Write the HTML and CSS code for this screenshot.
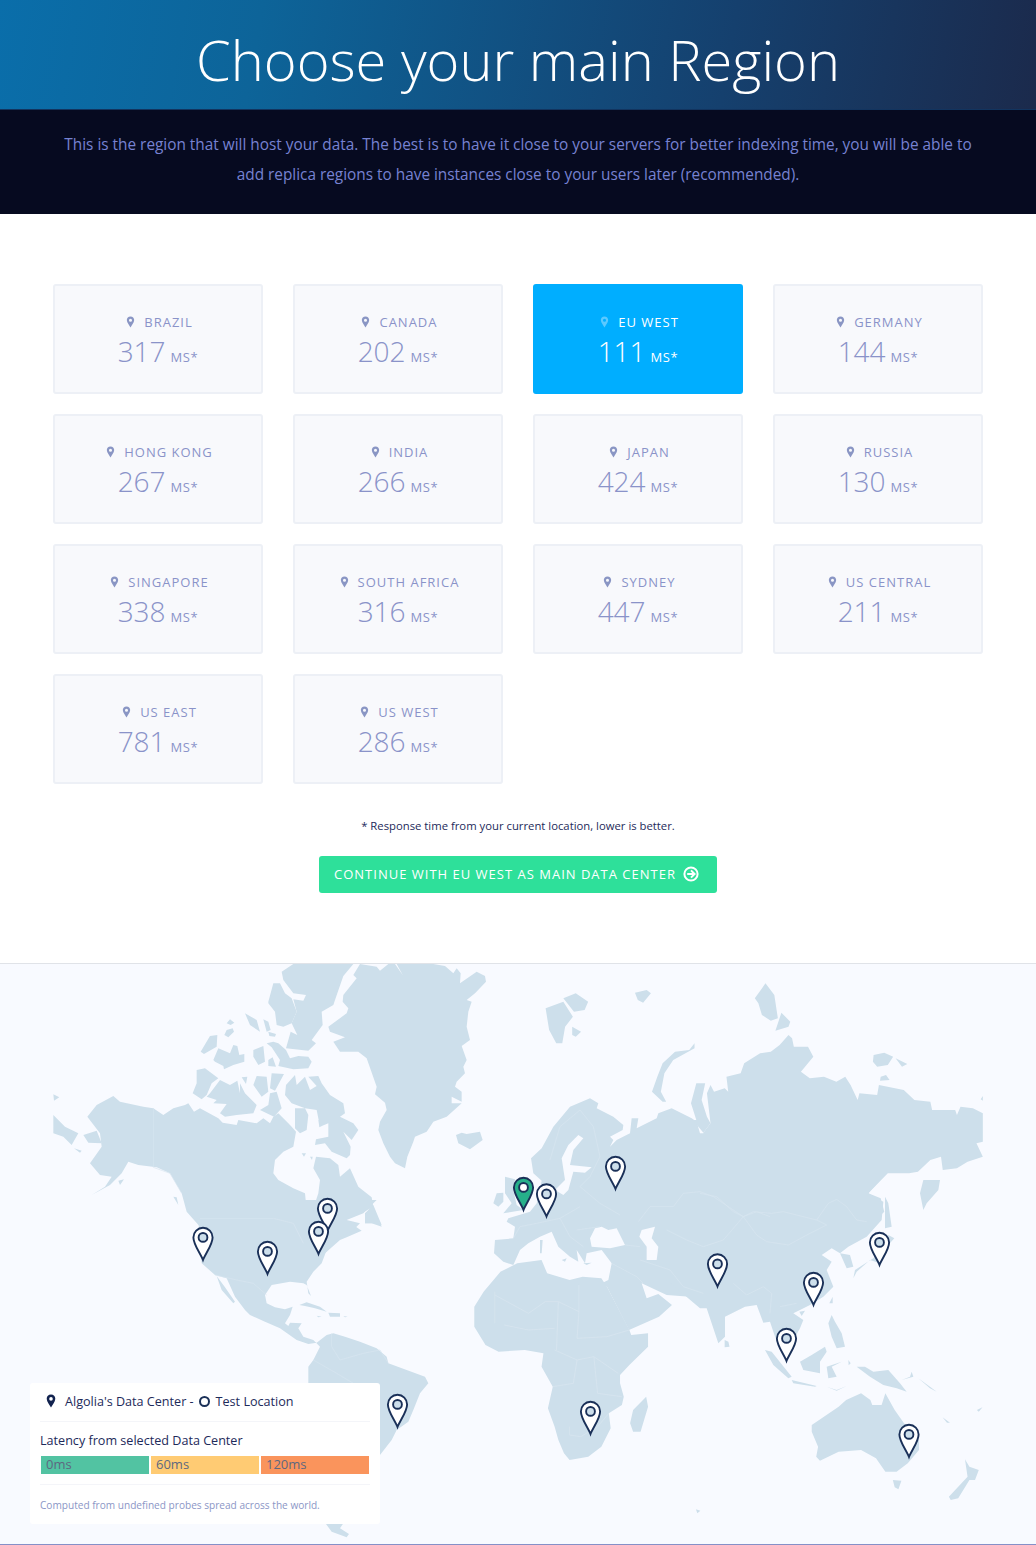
FILE: index.html
```html
<!DOCTYPE html>
<html lang="en">
<head>
  <meta charset="UTF-8" />
  <title>Choose your main Region</title>
  <link rel="stylesheet" href="styles.css">
</head>
<body>
  <svg class="defs" width="0" height="0">
    <symbol id="tiny-pin" viewBox="0 0 10 14">
      <path d="M5 0.5C2.4 0.5 0.7 2.4 0.7 4.8 0.7 7.6 3.6 11 5 13.5 6.4 11 9.3 7.6 9.3 4.8 9.3 2.4 7.6 0.5 5 0.5ZM5 3.1A1.8 1.8 0 1 1 5 6.7 1.8 1.8 0 0 1 5 3.1Z" fill-rule="evenodd"/>
    </symbol>
    <g id="map-pin">
      <path class="pin-body" d="M0-1C-2.5-7.5-9.6-16.5-9.6-23.6A9.6 9.6 0 1 1 9.6-23.6C9.6-16.5 2.5-7.5 0-1Z"/>
      <circle class="pin-dot" cx="0" cy="-23.6" r="4.4"/>
    </g>
  </svg>

  <header class="hero">
    <h1>Choose your main Region</h1>
  </header>
  <div class="intro">
    <p>This is the region that will host your data. The best is to have it close to your servers for better indexing time, you will be able to add replica regions to have instances close to your users later (recommended).</p>
  </div>

  <main class="picker">
    <div class="regions">
      <div class="region"><div class="region-name"><svg class="tiny"><use href="#tiny-pin"/></svg>Brazil</div><div class="region-ms">317<small>ms*</small></div></div>
      <div class="region"><div class="region-name"><svg class="tiny"><use href="#tiny-pin"/></svg>Canada</div><div class="region-ms">202<small>ms*</small></div></div>
      <div class="region selected"><div class="region-name"><svg class="tiny"><use href="#tiny-pin"/></svg>EU West</div><div class="region-ms">111<small>ms*</small></div></div>
      <div class="region"><div class="region-name"><svg class="tiny"><use href="#tiny-pin"/></svg>Germany</div><div class="region-ms">144<small>ms*</small></div></div>
      <div class="region"><div class="region-name"><svg class="tiny"><use href="#tiny-pin"/></svg>Hong Kong</div><div class="region-ms">267<small>ms*</small></div></div>
      <div class="region"><div class="region-name"><svg class="tiny"><use href="#tiny-pin"/></svg>India</div><div class="region-ms">266<small>ms*</small></div></div>
      <div class="region"><div class="region-name"><svg class="tiny"><use href="#tiny-pin"/></svg>Japan</div><div class="region-ms">424<small>ms*</small></div></div>
      <div class="region"><div class="region-name"><svg class="tiny"><use href="#tiny-pin"/></svg>Russia</div><div class="region-ms">130<small>ms*</small></div></div>
      <div class="region"><div class="region-name"><svg class="tiny"><use href="#tiny-pin"/></svg>Singapore</div><div class="region-ms">338<small>ms*</small></div></div>
      <div class="region"><div class="region-name"><svg class="tiny"><use href="#tiny-pin"/></svg>South Africa</div><div class="region-ms">316<small>ms*</small></div></div>
      <div class="region"><div class="region-name"><svg class="tiny"><use href="#tiny-pin"/></svg>Sydney</div><div class="region-ms">447<small>ms*</small></div></div>
      <div class="region"><div class="region-name"><svg class="tiny"><use href="#tiny-pin"/></svg>US Central</div><div class="region-ms">211<small>ms*</small></div></div>
      <div class="region"><div class="region-name"><svg class="tiny"><use href="#tiny-pin"/></svg>US East</div><div class="region-ms">781<small>ms*</small></div></div>
      <div class="region"><div class="region-name"><svg class="tiny"><use href="#tiny-pin"/></svg>US West</div><div class="region-ms">286<small>ms*</small></div></div>
    </div>
    <p class="footnote">* Response time from your current location, lower is better.</p>
    <a class="continue" href="#">Continue with EU West as main data center
      <svg class="continue-icon" viewBox="0 0 16 16"><circle cx="8" cy="8" r="6.6"/><path d="M8 4.4 11.6 8 8 11.6M4.2 8H11"/></svg>
    </a>
  </main>

  <section class="map">
    <svg class="world" viewBox="0 964 1036 580" width="1036" height="580">
      <defs><clipPath id="map-clip"><rect x="53" y="964" width="930" height="580"/></clipPath></defs>
      <g clip-path="url(#map-clip)">
        <!-- arctic + north america, top half -->
        <g class="land" transform="translate(0 960) scale(.33333)">
          <path d="M1080 12 1130 20 1140 32 1165 12 1185 12 1208 45 1190 12 1300 12 1335 18 1360 40 1370 25 1382 40 1380 70 1430 35 1455 48 1458 65 1425 100 1400 120 1415 125 1405 155 1400 200 1410 240 1385 258 1400 300 1390 320 1395 340 1370 365 1365 380 1385 395 1385 425 1355 410 1355 430 1385 430 1340 470 1300 485 1280 515 1245 530 1240 545 1222 590 1215 625 1185 610 1170 590 1150 550 1135 510 1140 485 1160 450 1155 428 1125 403 1130 380 1100 295 1075 275 1020 275 1000 245 1035 232 990 215 985 200 1040 160 1045 145 1028 125 1030 105 1070 55 1060 45Z"/>
          <path d="M880 12 1060 12 1030 48 1012 100 1000 135 965 155 968 195 935 240 948 250 925 272 858 265 872 215 892 225 875 190 890 155 880 118 910 122 918 105 880 100 850 60 845 35Z"/>
          <path d="M805 125 820 70 840 70 855 100 875 115 890 155 875 190 850 200 830 195 825 155 805 130Z"/>
          <path d="M858 270 835 250 820 245 800 250 815 262 840 300 835 318 880 328 925 325 935 305 925 290 895 288 870 295Z"/>
          <path d="M735 160 770 180 780 215 750 195ZM790 178 805 185 812 210 800 215ZM805 215 828 222 825 230 808 228ZM680 190 690 178 703 188 692 195ZM680 210 698 205 702 215 685 232 673 225ZM630 228 652 225 650 260 612 282 602 275ZM655 265 690 280 700 255 712 258 718 285 733 282 733 305 700 315 672 328 670 318 645 305 640 300ZM760 270 790 258 795 305 775 315 760 290ZM805 300 818 292 828 320 805 318Z"/>
          <path d="M590 330 615 325 655 355 635 370 620 405 605 418 578 400 590 370ZM630 400 660 360 690 375 712 362 720 400 720 370 735 400 770 435 760 460 710 465 675 470 660 460 680 432 640 430 650 420 620 410ZM770 348 800 350 805 395 785 410 760 375ZM815 340 852 342 825 392 810 385ZM725 352 742 350 738 372ZM810 400 830 395 845 445 822 470 780 450 805 435Z"/>
          <path d="M858 375 885 345 890 375 915 350 930 390 950 378 925 350 955 348 965 370 990 405 1030 430 1035 460 1020 470 1060 490 1075 510 1055 540 1030 515 1052 560 1050 585 1040 595 995 575 975 550 945 555 948 538 985 530 985 490 960 500 950 450 915 445 875 430 855 405ZM885 445 915 445 925 465 920 510 900 520 885 505ZM955 480 968 475 972 495 958 502Z"/>
          <path d="M262 470 290 435 340 408 360 425 430 440 460 445 490 465 520 445 555 435 565 430 582 455 600 445 655 475 668 488 710 495 715 480 770 490 790 475 810 490 820 470 835 460 865 490 875 500 888 515 880 560 850 575 825 600 820 640 835 660 880 685 915 700 918 730 940 745 955 700 960 660 940 625 948 590 990 595 1015 615 1020 650 1050 625 1075 680 1115 712 1120 740 1085 760 1040 770 1010 800 1000 815 1030 810 1060 795 1085 812 1040 832 1020 840 975 880 600 880 600 800 560 755 545 700 510 640 470 622 415 615 385 605 365 640 330 675 275 705 315 680 335 650 300 645 270 610 305 560 300 520Z"/>
          <path d="M160 465 195 500 235 520 215 555 190 530 160 520ZM160 403 178 412 162 422ZM250 525 290 512 305 550 265 548ZM222 565 245 572 240 578ZM355 662 372 658 360 675ZM520 710 530 712 535 735ZM1095 760 1120 735 1145 795 1125 790 1095 790ZM905 580 918 580 912 590ZM930 590 938 590 936 600Z"/>
          <path d="M1368 525 1385 518 1400 522 1440 515 1448 540 1410 568 1375 550Z"/>
        </g>
        <!-- rest of the americas -->
        <g class="land" transform="translate(150 1200) scale(.33333)">
          <path d="M105 0 120 35 145 60 155 190 195 225 230 235 255 290 285 330 300 345 345 365 390 385 440 420 475 432 500 428 530 405 550 400 585 410 630 425 680 445 710 470 715 490 770 510 825 530 835 550 810 580 790 630 775 665 740 690 725 720 690 765 660 820 640 880 570 985 597 1002 590 1012 545 995 528 972 520 700 475 550 475 500 490 480 510 440 490 420 460 410 445 385 455 370 420 368 415 378 405 370 420 345 428 320 405 328 375 322 350 310 345 285 365 255 420 245 460 250 470 255 483 288 475 280 470 245 490 215 515 190 530 150 570 110 610 90 630 70 590 60 640 40 680 0Z"/>
          <path d="M200 228 225 262 255 305 250 310 215 270ZM448 315 470 307 510 320 530 335 495 325 465 318ZM535 338 570 340 570 350 540 350ZM500 347 515 350 505 352ZM580 348 593 350 585 352ZM645 70 660 25 690 65 695 80 665 70Z"/>
        </g>
        <!-- eurasia -->
        <g class="land" transform="translate(470 1090) scale(.33333)">
          <path d="M183 205 215 175 250 110 300 50 360 25 385 40 380 55 430 80 460 105 458 120 420 140 405 125 430 150 420 170 440 150 480 130 485 85 505 85 500 115 560 85 565 70 605 55 665 85 680 95 690 130 900 130 900 560 850 600 760 620 725 650 700 650 660 620 590 615 515 580 530 625 565 612 606 645 567 680 477 720 411 590 395 580 415 570 425 520 395 480 350 490 345 520 320 480 325 515 300 500 265 470 245 425 210 440 175 460 150 480 130 525 100 515 72 490 75 450 130 445 135 410 110 395 115 385 180 365 200 340 215 272 190 250Z"/>
          <path d="M105 260 135 268 130 300 140 345 160 360 100 370 125 340 105 310ZM70 340 80 310 100 308 100 335 85 350ZM210 450 218 450 215 490 210 490ZM275 510 290 505 285 515ZM340 520 365 518 350 525Z"/>
        </g>
        <g class="sea" transform="translate(470 1090) scale(.33333)">
          <path d="M325 135 340 145 310 180 300 225 365 232 345 248 310 245 295 300 280 315 255 300 285 270 275 205 295 165ZM515 420 555 410 545 445 565 470 560 510 530 510 530 470 508 440ZM360 445 375 415 395 410 415 420 440 415 465 465 420 475 365 470Z"/>
        </g>
        <g class="land" transform="translate(480 960) scale(.35461 .33333)">
          <path d="M630 518 650 490 640 400 650 375 660 395 690 385 700 395 695 350 735 340 745 310 790 280 820 275 845 255 870 225 880 235 885 260 925 260 940 290 905 335 930 355 970 350 1005 365 1030 350 1045 375 1065 420 1070 400 1120 405 1125 375 1195 390 1225 420 1270 425 1275 450 1340 450 1345 465 1355 440 1390 445 1418 460 1418 545 1400 550 1418 590 1375 605 1345 625 1305 630 1300 590 1270 600 1235 635 1210 640 1150 640 1095 700 1130 715 1140 755 1050 850 630 850Z"/>
          <path d="M610 480 595 430 610 370 635 370 625 420 640 470 650 490 630 518 600 480ZM605 250 590 270 550 275 515 310 500 350 485 395 515 425 525 425 510 395 520 340 545 300 605 265ZM185 145 235 125 262 170 240 200 232 250 215 250 195 210ZM235 115 270 100 305 125 295 150 265 155ZM260 200 285 215 270 230 260 225ZM437 98 470 90 482 100 460 128 445 120ZM805 70 830 105 840 175 820 182 795 165 785 130 775 115ZM850 158 875 185 870 200 833 212ZM1110 285 1140 278 1165 290 1150 315 1120 320 1108 305ZM1172 295 1205 312 1190 320ZM1130 350 1145 345 1155 360 1128 362ZM1412 418 1418 408 1418 422Z"/>
        </g>
        <g class="land" transform="translate(700 1180) scale(.33333)">
          <path d="M540 0 505 40 530 55 550 65 545 120 500 170 445 200 420 220 395 205 365 225 395 245 380 270 400 320 370 350 330 375 300 390 280 400 310 420 300 445 275 490 240 500 225 470 210 425 190 428 170 375 135 380 75 410 75 470 55 490 20 385 0 385 -100 300 -100 0Z"/>
          <path d="M420 220 440 265 460 260 450 225ZM460 295 470 275 510 240 540 250 560 200 583 175 565 165 550 205 520 235 465 270ZM555 50 565 70 575 140 555 145ZM660 40 670 0 720 0 715 30 680 70 670 90ZM388 370 398 350 398 370ZM298 395 315 392 305 408ZM385 430 395 405 405 425 425 460 435 500 410 505 395 470ZM195 510 215 515 275 590 265 595 220 555ZM300 545 335 525 375 500 380 515 360 545 360 580 310 570ZM380 560 425 545 395 560 410 590 385 595ZM275 600 350 618 345 620 280 610ZM470 560 495 560 520 575 565 570 600 610 620 635 590 625 550 615 510 590ZM635 575 640 590 605 600 630 590ZM380 620 410 630 440 618 410 632ZM655 595 690 620 710 635 690 625ZM445 540 452 550 446 556Z"/>
        </g>
        <!-- africa, australia, new zealand -->
        <g class="land" transform="translate(450 1250) scale(.37369 .33333)">
          <path d="M65 170 90 125 135 65 180 40 245 30 260 70 320 90 355 80 405 85 420 110 480 240 485 255 530 250 530 290 480 345 455 375 455 400 465 440 460 465 425 490 430 535 405 590 370 620 320 630 305 610 290 570 280 530 262 475 275 410 245 350 250 310 200 300 130 305 95 285 65 230Z"/>
          <path d="M490 480 525 440 530 470 510 545 490 545 482 520ZM735 270 745 275 748 290 735 292ZM968 525 1040 470 1060 450 1100 430 1125 450 1130 465 1155 465 1165 430 1190 480 1215 520 1255 570 1255 600 1225 640 1195 665 1165 665 1140 625 1100 600 1040 605 990 632 980 620 985 590 968 545ZM1185 690 1208 692 1200 718 1190 712ZM1378 628 1390 650 1415 660 1405 690 1390 690 1360 745 1340 750 1335 740 1385 680ZM658 778 670 782 662 790ZM1410 480 1425 472 1415 485ZM1318 502 1338 518 1330 518Z"/>
        </g>
        <!-- borders -->
        <g class="borders" transform="translate(0 960) scale(.33333)">
          <path d="M460 445V622L510 640 545 700M600 775H820L880 790 910 850"/>
        </g>
        <g class="borders" transform="translate(150 1200) scale(.33333)">
          <path d="M195 225 260 240 310 250 350 285M545 400 545 440 570 480 640 460 690 450M490 480 560 520 610 550M690 450 715 490"/>
        </g>
        <g class="borders" transform="translate(470 1090) scale(.33333)">
          <path d="M240 210 270 110 330 60M330 60 370 110 390 200 360 260 330 290 390 340 450 375M505 395 540 350 610 350 640 310 690 305 730 320 820 380 860 365 900 380M200 400 270 385 330 350M320 420 390 410M130 445 150 410 200 400M270 385 300 440 340 470M590 420 650 450 700 470 760 450 820 380M510 510 600 540 640 590 700 610M465 465 510 470M425 520 500 560 520 580"/>
        </g>
        <g class="borders" transform="translate(700 1180) scale(.33333)">
          <path d="M0 40 50 50 100 95 130 110 160 95 215 100 250 95 290 105 350 120 385 70 410 58 440 80 470 120 500 125M130 110 170 165 200 185 265 195 330 160 380 135 350 120M100 310 140 345 190 320 215 340 210 400M240 380 290 370"/>
        </g>
        <g class="borders" transform="translate(450 1250) scale(.37369 .33333)">
          <path d="M120 125V220M120 135 210 190 255 155 290 155 345 185V105M290 155 285 300M345 185 340 265 420 260 480 240M145 225 210 240 280 235M280 300 340 330 385 320 450 370M340 330 330 400 275 410M385 320 395 430 460 440M320 530 320 555 350 560 395 530 425 490"/>
        </g>
        <!-- data center pins -->
        <use href="#map-pin" x="203" y="1261"/>
        <use href="#map-pin" x="267.5" y="1275"/>
        <use href="#map-pin" x="327.5" y="1232"/>
        <use href="#map-pin" x="318.5" y="1255"/>
        <use href="#map-pin" x="397.5" y="1428"/>
        <use href="#map-pin" x="615.5" y="1190"/>
        <use class="pin-active" href="#map-pin" x="523.5" y="1211"/>
        <use href="#map-pin" x="546.5" y="1217.5"/>
        <use href="#map-pin" x="717.5" y="1287.5"/>
        <use href="#map-pin" x="813.5" y="1306"/>
        <use href="#map-pin" x="879.5" y="1266"/>
        <use href="#map-pin" x="786.5" y="1362"/>
        <use href="#map-pin" x="590.5" y="1435"/>
        <use href="#map-pin" x="909" y="1458"/>
      </g>
    </svg>

    <div class="legend">
      <div class="legend-keys">
        <svg class="legend-pin"><use href="#tiny-pin"/></svg>
        <span>Algolia's Data Center -</span>
        <span class="legend-ring"></span>
        <span>Test Location</span>
      </div>
      <div class="legend-scale">
        <div class="legend-title">Latency from selected Data Center</div>
        <div class="bars">
          <div class="bar bar-low">0ms</div>
          <div class="bar bar-mid">60ms</div>
          <div class="bar bar-high">120ms</div>
        </div>
      </div>
      <div class="legend-note">Computed from undefined probes spread across the world.</div>
    </div>
  </section>
</body>
</html>
```

FILE: styles.css
```css
* { box-sizing: border-box; }
body { margin: 0; font-family: "Open Sans", sans-serif; color: #3a4570; background: #fff; }
.defs { position: absolute; }

.hero { height: 110px; background: linear-gradient(100deg, #0a6eaa 0%, #0d6499 25%, #15406e 70%, #1b2a4c 100%); border-bottom: 1px solid #12345f; text-align: center; }
.hero h1 { margin: 0; font-size: 56px; font-weight: 300; line-height: 118px; color: #fff; }
.intro { height: 104px; padding: 20px 50px 0; background: #060a20; text-align: center; }
.intro p { margin: 0; font-size: 15.36px; line-height: 30px; color: #7782d2; }

.picker { height: 749px; padding: 70px 53px 0; text-align: center; }
.regions { display: grid; grid-template-columns: repeat(4, 210px); grid-auto-rows: 110px; column-gap: 30px; row-gap: 20px; }
.region { padding-top: 27px; background: #f8f9fc; border: 2px solid #edf0f6; border-radius: 3px; color: #8a93c9; }
.region-name { display: flex; justify-content: center; align-items: center; height: 18px; padding-left: 3px; font-size: 13px; letter-spacing: 1px; text-transform: uppercase; }
.tiny { width: 9px; height: 12px; margin-right: 9px; fill: #8a96c4; }
.region-ms { margin-top: 2px; font-size: 28px; font-weight: 300; line-height: 36px; }
.region-ms small { margin-left: 5px; font-size: 13px; font-weight: 400; letter-spacing: .6px; text-transform: uppercase; }
.selected { background: #00aeff; border-color: #00aeff; color: #fff; }
.selected .tiny { fill: #5cc9ff; }

.footnote { margin: 34px 0 0; font-size: 11.3px; line-height: 16px; color: #1d2a5a; }
.continue { display: inline-flex; align-items: center; height: 37px; margin-top: 22px; padding: 0 18px 2px 15px; background: #2ee09a; border-radius: 3px; font-size: 13px; letter-spacing: 1px; text-transform: uppercase; text-decoration: none; color: #fff; }
.continue-icon { width: 16px; height: 16px; margin-left: 7px; fill: none; stroke: #fff; stroke-width: 2; }

.map { position: relative; height: 582px; background: #f8faff; border-top: 1px solid #e0e3e8; border-bottom: 1px solid #8590c8; }
.world { display: block; }
.land path { fill: #cddfeb; }
.sea path { fill: #f8faff; }
.borders path { fill: none; stroke: #d8e6f0; stroke-width: 2; }
.pin-body { fill: var(--pin-fill, #fff); stroke: #1a3058; stroke-width: 1.9; }
.pin-dot { fill: var(--pin-dot, #cddfeb); stroke: #1a3058; stroke-width: 1.9; }
.pin-active { --pin-fill: #26b08a; --pin-dot: #fff; }

.legend { position: absolute; left: 30px; top: 419px; width: 350px; height: 141px; padding: 0 10px; background: #fff; border-radius: 3px; color: #1d2a5a; font-size: 12.6px; }
.legend-keys { display: flex; align-items: center; height: 39px; padding: 0 0 2px 6px; border-bottom: 1px solid #f4f5f9; }
.legend-pin { width: 10px; height: 14px; margin-right: 9px; fill: #12234f; }
.legend-ring { width: 11px; height: 11px; margin: 0 6px 0 5px; border: 2px solid #1a3058; border-radius: 50%; }
.legend-scale { height: 63px; border-bottom: 1px solid #f4f5f9; }
.legend-title { padding-top: 10px; line-height: 17px; }
.bars { display: flex; gap: 2px; margin: 7px 1px 0; }
.bar { width: 108px; height: 18px; padding-left: 5px; font-size: 13px; line-height: 17px; color: #5d6880; }
.bar-low { background: #52c3a2; }
.bar-mid { background: #ffcb73; }
.bar-high { background: #fa945c; }
.legend-note { padding-top: 13px; font-size: 10.1px; line-height: 14px; color: #8b96c6; }
```
